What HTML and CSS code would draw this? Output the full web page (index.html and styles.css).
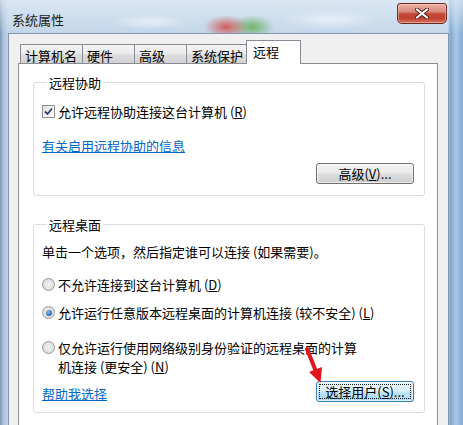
FILE: index.html
```html
<!DOCTYPE html>
<html lang="zh-CN">
<head>
<meta charset="utf-8">
<title>系统属性</title>
<link rel="stylesheet" href="styles.css">
</head>
<body>
<div class="window">
  <div class="titlebar">
    <span class="title">系统属性</span>
    <button class="close" type="button" aria-label="关闭">
      <svg width="14" height="11" viewBox="0 0 14 11" aria-hidden="true">
        <path d="M2 1.5 L12 9.5 M12 1.5 L2 9.5" stroke="#5a1e18" stroke-width="4" stroke-linecap="round"/>
        <path d="M2 1.5 L12 9.5 M12 1.5 L2 9.5" stroke="#ffffff" stroke-width="2.2" stroke-linecap="round"/>
      </svg>
    </button>
  </div>
  <div class="client">
    <div class="tabs">
      <div class="tab">计算机名</div>
      <div class="tab">硬件</div>
      <div class="tab">高级</div>
      <div class="tab">系统保护</div>
      <div class="tab active">远程</div>
    </div>
    <div class="panel">
      <fieldset class="group g1">
        <legend>远程协助</legend>
        <label class="check">
          <span class="box">
            <svg width="11" height="11" viewBox="0 0 11 11" aria-hidden="true"><path d="M2 5.5 L4.5 8 L9 2.5" fill="none" stroke="#2f3f6a" stroke-width="1.8"/></svg>
          </span>
          <span>允许远程协助连接这台计算机 (<u>R</u>)</span>
        </label>
        <a class="link info">有关启用远程协助的信息</a>
        <div class="btnrow">
          <button class="btn" type="button">高级(<u>V</u>)...</button>
        </div>
      </fieldset>
      <fieldset class="group g2">
        <legend>远程桌面</legend>
        <p class="desc">单击一个选项，然后指定谁可以连接 (如果需要)。</p>
        <label class="radio r1"><span class="dot"></span><span>不允许连接到这台计算机 (<u>D</u>)</span></label>
        <label class="radio r2 on"><span class="dot"></span><span>允许运行任意版本远程桌面的计算机连接 (较不安全) (<u>L</u>)</span></label>
        <label class="radio r3"><span class="dot"></span><span class="lines"><span class="ln">仅允许运行使用网络级别身份验证的远程桌面的计算</span><span class="ln">机连接 (更安全) (<u>N</u>)</span></span></label>
        <div class="btnrow split">
          <a class="link">帮助我选择</a>
          <button class="btn focus" type="button">选择用户(<u>S</u>)...</button>
        </div>
      </fieldset>
    </div>
  </div>
  <svg class="arrow" width="34" height="50" viewBox="300 340 34 50" aria-hidden="true">
    <line x1="307" y1="349" x2="315" y2="369" stroke="#e3161d" stroke-width="4" stroke-linecap="round"/>
    <polygon points="320.5,383 309,372 322,367" fill="#e3161d"/>
  </svg>
</div>
</body>
</html>
```

FILE: styles.css
```css
html, body {
  margin: 0;
  padding: 0;
}

body {
  width: 463px;
  height: 425px;
  overflow: hidden;
  font-family: "Noto Sans CJK SC", "Microsoft YaHei", sans-serif;
  font-size: 13px;
  color: #000;
}

.window {
  position: relative;
  height: 425px;
  display: flex;
  flex-direction: column;
  background:
    radial-gradient(ellipse 22px 12px at 226px 27px, rgba(208, 72, 70, 0.85), rgba(208, 72, 70, 0) 100%),
    radial-gradient(ellipse 22px 12px at 252px 27px, rgba(96, 172, 84, 0.85), rgba(96, 172, 84, 0) 100%),
    radial-gradient(ellipse 40px 8px at 150px 22px, rgba(255, 255, 255, 0.5), rgba(255, 255, 255, 0) 100%),
    radial-gradient(ellipse 50px 10px at 330px 20px, rgba(255, 255, 255, 0.5), rgba(255, 255, 255, 0) 100%),
    linear-gradient(to bottom, rgba(228, 238, 247, 0.7) 0, rgba(200, 218, 234, 0) 34px),
    linear-gradient(to right, #7e98b4 0, #a7bfd6 3px, #c2d5e8 8px, #c5d8ea 448px, #7ea6cf 450px, #a9c8e6 456px, #86abd1 463px);
}

.titlebar {
  height: 33px;
  display: flex;
  justify-content: space-between;
  align-items: flex-start;
  padding: 0 16px 0 12px;
  flex: none;
}

.title {
  margin-top: 11px;
  line-height: 17px;
  color: #1c1c1c;
}

.close {
  margin-top: 3px;
  width: 50px;
  height: 21px;
  padding: 0;
  border: 1px solid #6b2a22;
  border-radius: 3px 3px 5px 5px;
  background: linear-gradient(to bottom, #e9b1a5 0%, #d98a7c 40%, #c4493a 52%, #c1412f 75%, #d9745f 100%);
  box-shadow: inset 0 0 0 1px rgba(255, 210, 200, 0.45);
  display: flex;
  align-items: center;
  justify-content: center;
}

.close svg {
  display: block;
}

.client {
  flex: 1;
  margin: 0 14px 0 8px;
  background: #f0f0f0;
  border: 1px solid #8596aa;
  border-bottom: none;
  padding: 7px 10px 0 9px;
  display: flex;
  flex-direction: column;
}

.tabs {
  height: 22px;
  display: flex;
  align-items: flex-end;
  padding-left: 2px;
  flex: none;
}

.tab {
  box-sizing: border-box;
  height: 19px;
  min-width: 53px;
  padding: 2px 5px 0 4px;
  line-height: 17px;
  border: 1px solid #898c95;
  border-bottom: none;
  margin-right: -1px;
  background: linear-gradient(to bottom, #f3f3f3 0%, #ebebeb 50%, #dedede 50%, #d2d2d2 100%);
  white-space: nowrap;
}

.tab.active {
  position: relative;
  z-index: 1;
  height: 24px;
  min-width: 55px;
  margin: 0 0 -1px -2px;
  padding-left: 6px;
  background: #fff;
}

.panel {
  flex: 1;
  background: #fff;
  border: 1px solid #898c95;
  border-bottom: none;
  padding: 0 12px 0 14px;
}

.group {
  margin: 0;
  border: 1px solid #d5dfe5;
  border-radius: 3px;
  padding: 0 10px 0 8px;
  min-width: 0;
}

.group legend {
  padding: 0 2px;
  margin-left: 5px;
  line-height: 17px;
}

.g1 {
  margin-top: 10px;
  padding-top: 12px;
  padding-bottom: 11px;
}

.g2 {
  margin-top: 20px;
  padding-top: 10px;
  padding-bottom: 10px;
}

.check, .radio {
  display: flex;
  align-items: flex-start;
  line-height: 17px;
}

.box {
  box-sizing: border-box;
  width: 13px;
  height: 13px;
  margin: 2px 3px 0 0;
  border: 1px solid #8e8f8f;
  background: linear-gradient(135deg, #dcdcdc 0%, #f6f6f6 60%, #ffffff 100%);
  display: flex;
  align-items: center;
  justify-content: center;
  flex: none;
}

.box svg {
  display: block;
}

.link {
  display: block;
  color: #0066cc;
  text-decoration: underline;
  line-height: 17px;
  cursor: pointer;
}

.info {
  margin-top: 17px;
  width: max-content;
}

.btnrow {
  display: flex;
  justify-content: flex-end;
  align-items: flex-end;
  margin-top: 9px;
}

.btn {
  box-sizing: border-box;
  width: 98px;
  height: 21px;
  padding: 0;
  font: inherit;
  line-height: 17px;
  color: #000;
  border: 1px solid #707070;
  border-radius: 3px;
  background: linear-gradient(to bottom, #f2f2f2 0%, #ebebeb 48%, #dddddd 52%, #cfcfcf 100%);
  box-shadow: inset 0 0 0 1px rgba(255, 255, 255, 0.6);
}

.btn.focus {
  border-color: #3c7fb1;
  background: linear-gradient(to bottom, #eaf6fd 0%, #d9f0fc 48%, #bee6fd 52%, #a7d9f5 100%);
  outline: 1px dotted #1b1b1b;
  outline-offset: -4px;
}

.desc {
  margin: 0;
  line-height: 17px;
}

.dot {
  box-sizing: border-box;
  width: 13px;
  height: 13px;
  margin: 2px 3px 0 0;
  border-radius: 50%;
  border: 1px solid #9a9a9a;
  background: radial-gradient(circle at 50% 50%, #f4f4f4 0%, #e2e2e2 55%, #d0d0d0 100%);
  flex: none;
  display: flex;
  align-items: center;
  justify-content: center;
}

.radio.on .dot::after {
  content: "";
  width: 6px;
  height: 6px;
  border-radius: 50%;
  background: radial-gradient(circle at 40% 35%, #8fc3ef 0%, #2f6fb8 60%, #1c4f8c 100%);
}

.r1 {
  margin-top: 16px;
}

.r2 {
  margin-top: 11px;
}

.r3 {
  margin-top: 17px;
  line-height: 19px;
}

.r3 .dot {
  margin-top: 3px;
}

.lines {
  display: flex;
  flex-direction: column;
}

.ln {
  display: block;
  white-space: nowrap;
}

.btnrow.split {
  justify-content: space-between;
  margin-top: 5px;
}

.arrow {
  position: absolute;
  left: 300px;
  top: 340px;
  overflow: visible;
}
```
